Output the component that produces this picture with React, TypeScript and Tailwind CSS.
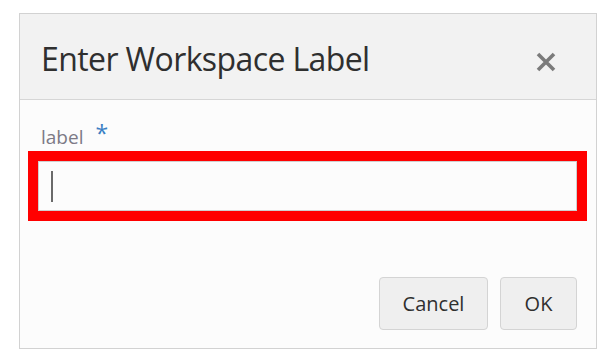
const font = { fontFamily: '"Open Sans", "Noto Sans", Arial, sans-serif' };

const CloseIcon = () => (
  <svg width="22" height="20" viewBox="0 0 22 20" className="block mt-[10px]">
    <path d="M3 2 L19 18 M19 2 L3 18" stroke="#7b7b7b" strokeWidth="3.6" strokeLinecap="butt" />
  </svg>
);

const App = () => (
  <div className="w-[605px] h-[355px] bg-white pt-[13px] pl-[19px]" style={font}>
    <div className="w-[578px] h-[336px] border border-[#d2d2d2] flex flex-col">
      {/* Header */}
      <div className="h-[86px] bg-[#f2f2f2] border-b border-[#d6d6d6] flex items-center justify-between pl-[21px] pr-[39px]">
        <h1 className="text-[32px] text-[#2f2f2f] tracking-[-0.6px] leading-none pt-[4px]">Enter Workspace Label</h1>
        <CloseIcon />
      </div>

      {/* Body */}
      <div className="flex-1 bg-[#fcfcfc] flex flex-col">
        <div className="pl-[21px] pt-[24px] h-[51px] flex items-start">
          <span className="text-[19px] leading-[27px] text-[#7c7a86]">label</span>
          <span className="ml-[12px] text-[23px] leading-none text-[#3b7fc4] -mt-[2px]">*</span>
        </div>
        <div className="ml-[8px] mr-[9px] border-[10px] border-[#ff0000]">
          <div className="h-[50px] border border-[#cfcfcf] bg-[#fcfcfc] flex items-center pl-[12px]">
            <span className="block w-[2px] h-[31px] bg-[#6a6a6a]" />
          </div>
        </div>
        <div className="flex-1 flex items-end justify-end gap-[12px] pr-[19px] pb-[18px]">
          <button className="w-[109px] h-[53px] rounded-[4px] border border-[#d4d4d4] bg-[#efefef] text-[20px] text-[#2f2f2f]">Cancel</button>
          <button className="w-[77px] h-[53px] rounded-[4px] border border-[#d4d4d4] bg-[#efefef] text-[20px] text-[#2f2f2f]">OK</button>
        </div>
      </div>
    </div>
  </div>
);

export default App;
